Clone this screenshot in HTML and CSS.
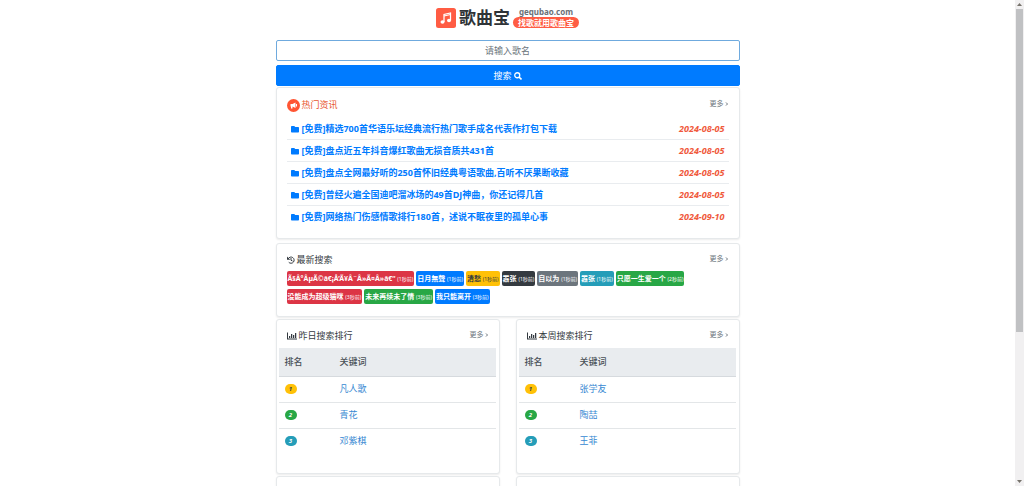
FILE: index.html
```html
<!DOCTYPE html>
<html lang="zh-CN">
<head>
<meta charset="utf-8">
<title>歌曲宝</title>
<link rel="stylesheet" href="styles.css">
</head>
<body>
<svg class="defs" aria-hidden="true">
  <symbol id="folder" viewBox="0 0 512 448"><path d="M464 64H272L208 0H48C21 0 0 21 0 48v320c0 27 21 48 48 48h416c27 0 48-21 48-48V112c0-27-21-48-48-48z"/></symbol>
  <symbol id="chart" viewBox="0 0 20 16"><path d="M0 1h2v12h18v2H0zM4 8h2.500v4H4zM8 4h2.500v8H8zM12 6h2.500v6H12zM16 2h2.500v10H16z"/></symbol>
  <symbol id="chevron" viewBox="0 0 8 12"><path d="M2 3l3 3-3 3" fill="none" stroke="currentColor" stroke-width="2"/></symbol>
</svg>
<main class="container">
  <header class="header">
    <a class="brand" href="#">
      <svg class="brand-mark" viewBox="0 0 40 40" aria-hidden="true"><rect width="40" height="40" rx="5" fill="#ff5c43"/><g fill="none" stroke="#fff" stroke-width="2.500"><path d="M16 28V13l13-3v15"/><path d="M16 16l13-3"/></g><ellipse cx="13" cy="28" rx="4" ry="3.500" fill="#fff"/><ellipse cx="26" cy="25" rx="4" ry="3.500" fill="#fff"/></svg>
      <span class="brand-name">歌曲宝</span>
      <span class="brand-side"><span class="brand-domain">gequbao.com</span><span class="brand-slogan">找歌就用歌曲宝</span></span>
    </a>
  </header>
  <form class="search">
    <input class="search-input" type="text" placeholder="请输入歌名" aria-label="请输入歌名">
    <button class="search-button" type="button">搜索 <svg class="icon" viewBox="0 0 16 16" aria-hidden="true"><circle cx="6.500" cy="6.500" r="5" fill="none" stroke="currentColor" stroke-width="2.600"/><path d="M10 10l5 5" stroke="currentColor" stroke-width="3.200"/></svg></button>
  </form>
  <section class="card news">
    <div class="card-head">
      <h2 class="title hot"><svg class="hot-icon" viewBox="0 0 26 26" aria-hidden="true"><circle cx="13" cy="13" r="13" fill="#ff5533"/><path d="M7 10h4l6-3v11l-6-3v4H8v-4H7z" fill="#fff"/><path d="M19 10v5" stroke="#fff" stroke-width="2"/></svg>热门资讯</h2>
      <a class="more" href="#">更多<svg class="chev"><use href="#chevron"/></svg></a>
    </div>
    <ul class="news-list">
      <li><a href="#"><svg class="folder"><use href="#folder"/></svg>[免费]精选700首华语乐坛经典流行热门歌手成名代表作打包下载</a><time>2024-08-05</time></li>
      <li><a href="#"><svg class="folder"><use href="#folder"/></svg>[免费]盘点近五年抖音爆红歌曲无损音质共431首</a><time>2024-08-05</time></li>
      <li><a href="#"><svg class="folder"><use href="#folder"/></svg>[免费]盘点全网最好听的250首怀旧经典粤语歌曲,百听不厌果断收藏</a><time>2024-08-05</time></li>
      <li><a href="#"><svg class="folder"><use href="#folder"/></svg>[免费]曾经火遍全国迪吧溜冰场的49首DJ神曲，你还记得几首</a><time>2024-08-05</time></li>
      <li><a href="#"><svg class="folder"><use href="#folder"/></svg>[免费]网络热门伤感情歌排行180首，述说不眠夜里的孤单心事</a><time>2024-09-10</time></li>
    </ul>
  </section>
  <section class="card latest">
    <div class="card-head">
      <h2 class="title"><svg class="icon" viewBox="0 0 16 16" aria-hidden="true"><path d="M2.500 5.500A6.200 6.200 0 1 1 3.500 12.500M8 4v4.500l3 1.500" fill="none" stroke="currentColor" stroke-width="2"/><path d="M0 1v6.500h6.500z"/></svg>最新搜索</h2>
      <a class="more" href="#">更多<svg class="chev"><use href="#chevron"/></svg></a>
    </div>
    <div class="tags">
      <a class="tag red" href="#">Ã§Â°ÂµÃ©â€¡Å’Ã¥Â¨Â»Ã¤Â»â€“ <small>(1秒前)</small></a>
      <a class="tag blue" href="#">日月無聲 <small>(1秒前)</small></a>
      <a class="tag yellow" href="#">清愁 <small>(1秒前)</small></a>
      <a class="tag dark" href="#">嚣张 <small>(1秒前)</small></a>
      <a class="tag gray" href="#">自以为 <small>(1秒前)</small></a>
      <a class="tag teal" href="#">嚣张 <small>(1秒前)</small></a>
      <a class="tag green" href="#">只愿一生爱一个 <small>(2秒前)</small></a>
      <a class="tag red" href="#">没能成为超级猫咪 <small>(3秒前)</small></a>
      <a class="tag green" href="#">未来再续未了情 <small>(3秒前)</small></a>
      <a class="tag blue" href="#">我只能离开 <small>(3秒前)</small></a>
    </div>
  </section>
  <div class="ranks">
    <section class="card rank">
      <div class="card-head">
        <h2 class="title"><svg class="chart"><use href="#chart"/></svg>昨日搜索排行</h2>
        <a class="more" href="#">更多<svg class="chev"><use href="#chevron"/></svg></a>
      </div>
      <table>
        <thead><tr><th>排名</th><th>关键词</th></tr></thead>
        <tbody>
          <tr><td><span class="num yellow">1</span></td><td><a href="#">凡人歌</a></td></tr>
          <tr><td><span class="num green">2</span></td><td><a href="#">青花</a></td></tr>
          <tr><td><span class="num teal">3</span></td><td><a href="#">邓紫棋</a></td></tr>
        </tbody>
      </table>
    </section>
    <section class="card rank">
      <div class="card-head">
        <h2 class="title"><svg class="chart"><use href="#chart"/></svg>本周搜索排行</h2>
        <a class="more" href="#">更多<svg class="chev"><use href="#chevron"/></svg></a>
      </div>
      <table>
        <thead><tr><th>排名</th><th>关键词</th></tr></thead>
        <tbody>
          <tr><td><span class="num yellow">1</span></td><td><a href="#">张学友</a></td></tr>
          <tr><td><span class="num green">2</span></td><td><a href="#">陶喆</a></td></tr>
          <tr><td><span class="num teal">3</span></td><td><a href="#">王菲</a></td></tr>
        </tbody>
      </table>
    </section>
    <section class="card next"></section>
    <section class="card next"></section>
  </div>
</main>
<div class="scrollbar" aria-hidden="true">
  <svg viewBox="0 0 9 9"><path d="M2 6l2.500-3L7 6z"/></svg>
  <div class="track"><div class="thumb"></div></div>
  <svg viewBox="0 0 9 9"><path d="M2 3l2.500 3L7 3z"/></svg>
</div>
</body>
</html>
```
FILE: styles.css
```css
* { box-sizing: border-box; }

html { height: 100%; overflow: hidden; }

body {
  margin: 0;
  height: 100%;
  overflow: hidden;
  display: flex;
  background: #fff;
  color: #343a40;
  font: 9px/14px "Noto Sans", "Noto Sans CJK SC", sans-serif;
}

a { color: inherit; text-decoration: none; }
h2, ul { margin: 0; padding: 0; }
svg { fill: currentColor; flex: none; }
.defs { position: absolute; width: 0; height: 0; }

.container {
  flex: 1;
  max-width: 464px;
  margin: 0 auto;
}

.header {
  display: flex;
  justify-content: center;
  padding: 7px 0 12px;
}
.brand { display: flex; align-items: center; gap: 3px; height: 21px; }
.brand-mark { width: 20px; height: 20px; }
.brand-name { font-size: 17px; line-height: 20px; font-weight: 700; color: #2f3337; }
.brand-side { display: flex; flex-direction: column; align-items: center; }
.brand-domain { font-size: 8px; line-height: 10px; font-weight: 700; color: #6a7076; }
.brand-slogan {
  padding: 0 5px;
  border-radius: 6px;
  background: #ff5c43;
  color: #fff;
  font-size: 8px;
  line-height: 11px;
  font-weight: 700;
}

.search { display: flex; flex-direction: column; gap: 4px; margin-bottom: 1px; }
.search-input, .search-button {
  width: 100%;
  height: 21px;
  padding: 0;
  border: 1px solid #007bff;
  border-radius: 2px;
  font: inherit;
  text-align: center;
}
.search-input { border-color: #6faade; background: #fff; color: #495057; outline: 0; }
.search-input::placeholder { color: #6c757d; opacity: 1; }
.search-button {
  display: flex;
  align-items: center;
  justify-content: center;
  gap: 2px;
  background: #007bff;
  color: #fff;
}
.icon { width: 8px; height: 8px; }

.card {
  border: 1px solid #e6e9eb;
  border-radius: 3px;
  background: #fff;
  box-shadow: 0 1px 2px rgba(0, 0, 0, .08);
}
.card-head { display: flex; justify-content: space-between; padding: 0 10px; }
.title {
  display: flex;
  align-items: center;
  gap: 2px;
  font-size: 9px;
  line-height: 14px;
  font-weight: 400;
}
.hot { color: #e8562f; }
.hot-icon { width: 13px; height: 13px; }
.more { display: flex; align-items: center; gap: 1px; height: 11px; color: #6c757d; font-size: 7px; }
.chev { width: 4px; height: 6px; }

.news { padding: 10px 0; margin-bottom: 4px; }
.news-list { list-style: none; padding: 6px 10px 0; }
.news-list li {
  display: flex;
  justify-content: space-between;
  padding: 4px 4px 3px;
  border-bottom: 1px solid #e9ecef;
  font-weight: 700;
}
.news-list li:last-child { border-bottom: 0; padding-bottom: 4px; }
.news-list a { display: flex; align-items: center; gap: 3px; color: #007bff; }
.news-list time { color: #f0593c; font-style: italic; }
.folder { width: 8px; height: 7px; }

.latest { padding: 9px 0 12px; margin-bottom: 2px; }
.tags { display: flex; flex-wrap: wrap; gap: 3px 2px; padding: 4px 40px 0 10px; }
.tag {
  height: 15px;
  padding: 0 1px;
  border-radius: 2px;
  color: #fff;
  font-size: 7px;
  line-height: 15px;
  font-weight: 700;
  white-space: nowrap;
}
.tag small { font-size: 5px; font-weight: 400; }
.red { background: #dc3545; }
.blue { background: #007bff; }
.dark { background: #343a40; }
.gray { background: #6c757d; }
.teal { background: #259db8; }
.green { background: #28a745; }
.tag.yellow, .num.yellow { background: #ffc107; color: #343a40; }

.ranks { display: grid; grid-template-columns: 1fr 1fr; gap: 2px 16px; }
.rank { padding: 9px 3px 19px 2px; }
.rank .card-head { padding: 0 7px 5px 8px; }
.chart { width: 10px; height: 8px; }

table { width: 100%; border-collapse: collapse; table-layout: fixed; }
th, td { height: 26px; padding: 0 6px; text-align: left; font-weight: 400; border-bottom: 1px solid #e3e6e8; }
th { height: 28px; background: #e9ecef; border-color: #d6dade; color: #495057; font-weight: 500; }
th:first-child { width: 55px; }
tr:last-child td { border-bottom: 0; }
td a { color: #3688d2; }
.num {
  display: block;
  width: 12px;
  border-radius: 5px;
  color: #fff;
  font-size: 6px;
  line-height: 10px;
  font-style: italic;
  font-weight: 700;
  text-align: center;
}
.next { height: 80px; }

.scrollbar { display: flex; flex-direction: column; width: 9px; background: #f1f0f1; color: #77736c; }
.scrollbar svg { width: 9px; height: 9px; }
.track { flex: 1; padding: 0 1px; }
.thumb { height: 69%; background: #c0c1c3; }
```
